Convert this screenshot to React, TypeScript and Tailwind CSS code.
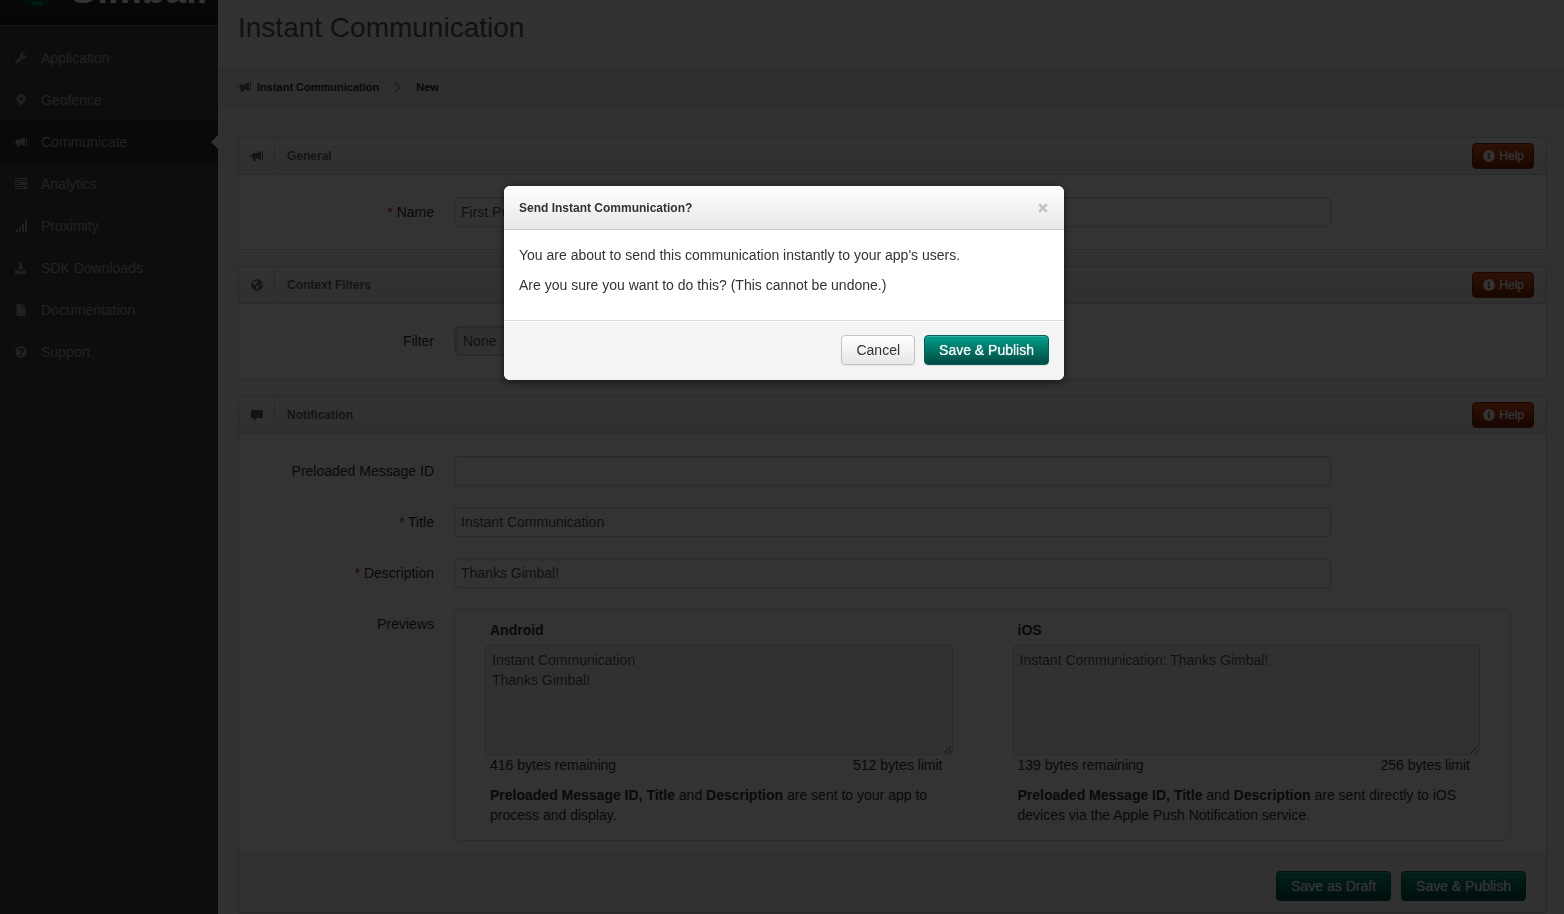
import type { ReactNode } from "react";
import { FaWrench, FaMapMarkerAlt, FaFile, FaQuestionCircle, FaInfoCircle, FaGlobeAmericas } from "react-icons/fa";

function Bullhorn() {
  return (
    <svg width="13" height="12" viewBox="0 0 13 12" fill="currentColor" aria-hidden="true">
      <path d="M12 1h1v9h-1zM11 1v9L7 8.500H5.500L6 11H3.500L3 8.500H2v-5h4zM0 4.500h1v3H0z" />
    </svg>
  );
}

function Rows() {
  return (
    <svg width="12" height="12" viewBox="0 0 12 12" fill="currentColor" aria-hidden="true">
      <path
        fillRule="evenodd"
        d="M0 0h12v3H0zM1 1v1h10V1zM0 4h12v3H0zM1 5v1h5V5zM0 8h12v3H0zM1 9v1h8V9z"
      />
    </svg>
  );
}

function Signal() {
  return (
    <svg width="12" height="12" viewBox="0 0 12 12" fill="currentColor" aria-hidden="true">
      <path d="M1 9h2v3H1zM4 7h2v5H4zM7 4h2v8H7zM10 0h2v12h-2z" />
    </svg>
  );
}

function DownloadTray() {
  return (
    <svg width="12" height="12" viewBox="0 0 12 12" fill="currentColor" aria-hidden="true">
      <path d="M4 0h3v5h2.500l-4 3.500L1.500 5H4z" />
      <path d="M0 8h3l2.500 2L8 8h3v4H0zM8 9.500v1h2v-1z" fillRule="evenodd" />
    </svg>
  );
}

function Comment() {
  return (
    <svg width="12" height="12" viewBox="0 0 12 12" fill="currentColor" aria-hidden="true">
      <path d="M0 1h12v8H5.500L2.500 12V9H0z" />
    </svg>
  );
}

const navItems: { label: string; icon: ReactNode; active?: boolean }[] = [
  { label: "Application", icon: <FaWrench size={12} /> },
  { label: "Geofence", icon: <FaMapMarkerAlt size={12} /> },
  { label: "Communicate", icon: <Bullhorn />, active: true },
  { label: "Analytics", icon: <Rows /> },
  { label: "Proximity", icon: <Signal /> },
  { label: "SDK Downloads", icon: <DownloadTray /> },
  { label: "Documentation", icon: <FaFile size={12} /> },
  { label: "Support", icon: <FaQuestionCircle size={12} /> },
];

function Sidebar() {
  return (
    <aside className="w-[218px] shrink-0 bg-[#414141]">
      <div className="flex h-[26px] items-end gap-1 overflow-hidden border-b border-[#6a6a6a] bg-linear-to-b from-[#282828] to-[#1c1c1c] pb-[17px] pl-[10px]">
        <svg width="54" height="54" viewBox="0 0 54 54" className="shrink-0" aria-hidden="true">
          <circle cx="27" cy="27" r="25" fill="none" stroke="#084a40" strokeWidth="3" strokeDasharray="6 2" />
          <circle cx="27" cy="31" r="18" fill="none" stroke="#0a5a4d" strokeWidth="3" />
          <ellipse cx="27" cy="49" rx="6" ry="2" fill="#0b8f79" />
        </svg>
        <span className="text-[38px] leading-9 font-bold text-white">Gimbal.</span>
      </div>
      <nav className="mt-[10px] border-t border-[#383838]">
        {navItems.map((item) => (
          <a
            key={item.label}
            href="#"
            className={
              "relative flex h-[42px] items-center gap-[14px] border-b border-[#383838] pl-[14px] text-sm text-[#a8a8a8] " +
              (item.active ? "bg-[#2d2d2d]" : "")
            }
          >
            <span className="flex w-[13px] justify-center text-[#a0a0a0]">{item.icon}</span>
            {item.label}
            {item.active && (
              <svg width="7" height="14" viewBox="0 0 7 14" className="absolute right-0" aria-hidden="true">
                <path d="M7 0v14L0 7z" fill="#f5f5f5" />
              </svg>
            )}
          </a>
        ))}
      </nav>
    </aside>
  );
}

function Card({ title, icon, children }: { title: string; icon: ReactNode; children: ReactNode }) {
  return (
    <section className="border border-[#d0d0d0] bg-[#fcfcfc]">
      <header className="flex h-[37px] items-stretch border-b border-[#d0d0d0] bg-linear-to-b from-[#fafafa] to-[#ececec]">
        <span className="flex w-9 items-center justify-center border-r border-[#d0d0d0] text-[#666666]">{icon}</span>
        <h2 className="flex flex-1 items-center pl-3 text-xs font-bold text-[#666666]">{title}</h2>
        <button
          type="button"
          className="mt-[5px] mr-3 flex h-[26px] items-center gap-1 rounded border border-[#7d2a0b] bg-linear-to-b from-[#e6551e] to-[#7d2000] pr-[9px] pl-[10px] text-xs text-white [text-shadow:0_0_1px_rgba(255,255,255,0.7)]"
        >
          <FaInfoCircle size={12} />
          Help
        </button>
      </header>
      {children}
    </section>
  );
}

function Row({
  label,
  htmlFor,
  required,
  divider,
  children,
}: {
  label: string;
  htmlFor?: string;
  required?: boolean;
  divider?: boolean;
  children: ReactNode;
}) {
  return (
    <div className={"mx-[15px] flex gap-5 py-[10px] " + (divider ? "border-b border-[#f3f3f3]" : "")}>
      <label htmlFor={htmlFor} className="w-[180px] shrink-0 text-right text-sm leading-[30px] text-[#333333]">
        {required && <span className="text-[#e00000]">* </span>}
        {label}
      </label>
      <div className="mr-5 min-w-0 flex-1">{children}</div>
    </div>
  );
}

function TextInput({ id, value }: { id: string; value: string }) {
  return (
    <input
      id={id}
      type="text"
      defaultValue={value}
      className="block h-[30px] w-[83%] rounded border border-[#cccccc] bg-[#fcfcfc] px-[6px] text-sm text-[#555555] shadow-[inset_0_1px_1px_rgba(0,0,0,0.075)]"
    />
  );
}

function Preview({
  id,
  platform,
  text,
  remaining,
  limit,
  children,
}: {
  id: string;
  platform: string;
  text: string;
  remaining: number;
  limit: number;
  children: ReactNode;
}) {
  return (
    <div className="flex-1 px-[30px] pt-[10px] pb-[15px] text-sm leading-5 text-[#333333]">
      <label htmlFor={id} className="mb-[5px] block pl-[5px] font-bold">
        {platform}
      </label>
      <textarea
        id={id}
        readOnly
        defaultValue={text}
        className="block h-[110px] w-full resize rounded border border-[#cccccc] bg-[#f2f2f2] px-[6px] py-1 text-[#555555]"
      />
      <div className="flex justify-between pr-[10px] pl-[5px]">
        <span>{remaining} bytes remaining</span>
        <span>{limit} bytes limit</span>
      </div>
      <p className="mt-[10px] pl-[5px]">
        <b>Preloaded Message ID, Title</b> and <b>Description</b> {children}
      </p>
    </div>
  );
}

function PrimaryButton({ children }: { children: ReactNode }) {
  return (
    <button
      type="button"
      className="h-[30px] rounded border border-[#006154] bg-linear-to-b from-[#00a18b] to-[#004a41] px-[14px] text-sm text-white shadow-[inset_0_1px_0_rgba(255,255,255,0.2),0_1px_1px_rgba(0,0,0,0.1)] [text-shadow:0_0_1px_rgba(255,255,255,0.7)]"
    >
      {children}
    </button>
  );
}

function ConfirmDialog() {
  return (
    <div className="fixed inset-0 z-50 flex items-start justify-center bg-black/80 pt-[186px] pl-1">
      <div
        role="dialog"
        aria-modal="true"
        aria-labelledby="confirm-title"
        className="w-[560px] overflow-hidden rounded-md bg-white text-sm leading-5 text-[#333333] shadow-[0_2px_8px_rgba(0,0,0,0.6)]"
      >
        <div className="flex h-11 items-center justify-between border-b border-[#cccccc] bg-linear-to-b from-white to-[#e8e8e8] px-[15px]">
          <h3 id="confirm-title" className="text-xs font-bold">
            Send Instant Communication?
          </h3>
          <button type="button" aria-label="Close" className="flex w-3 justify-center text-[#c2c2c2]">
            <svg width="10" height="10" viewBox="0 0 10 10" aria-hidden="true">
              <path d="M1.200 1.200l7.600 7.600M8.800 1.200L1.200 8.800" stroke="currentColor" strokeWidth="2.600" />
            </svg>
          </button>
        </div>
        <div className="px-[15px] pt-[15px] pb-[25px]">
          <p className="mb-[10px]">You are about to send this communication instantly to your app's users.</p>
          <p>Are you sure you want to do this? (This cannot be undone.)</p>
        </div>
        <div className="flex justify-end gap-[9px] border-t border-[#dddddd] bg-[#f4f4f4] px-[15px] pt-[14px] pb-[15px] shadow-[inset_0_1px_0_#ffffff]">
          <button
            type="button"
            className="h-[30px] rounded border border-[#c4c4c4] bg-linear-to-b from-white to-[#e6e6e6] px-[14px] shadow-[0_1px_1px_rgba(0,0,0,0.08)]"
          >
            Cancel
          </button>
          <PrimaryButton>Save &amp; Publish</PrimaryButton>
        </div>
      </div>
    </div>
  );
}

export default function App() {
  return (
    <div className="flex min-h-screen bg-[#f3f3f3] font-['Liberation_Sans',Arial,sans-serif]">
      <Sidebar />
      <main className="min-w-0 flex-1">
        <div className="h-[68px] bg-linear-to-b from-[#fafafa] to-[#f3f3f3] px-5 pt-2">
          <h1 className="text-[28px] leading-10 text-[#555555]">Instant Communication</h1>
        </div>
        <div className="flex h-[38px] items-center border-y border-[#dcdcdc] bg-[#e9e9e9] px-5 text-[11px] font-bold text-[#2a2a2a]">
          <span className="mr-[6px] text-[#666666]">
            <Bullhorn />
          </span>
          <a href="#">Instant Communication</a>
          <svg width="7" height="11" viewBox="0 0 7 11" fill="none" stroke="#888888" className="mx-[15px]" aria-hidden="true">
            <path d="M1 .5l5 5-5 5" strokeWidth="1.200" />
          </svg>
          <span>New</span>
        </div>

        <div className="flex flex-col gap-4 pt-[31px] pr-[17px] pl-5">
          <Card title="General" icon={<Bullhorn />}>
            <div className="py-3">
              <Row label="Name" htmlFor="name" required>
                <TextInput id="name" value="First Push" />
              </Row>
            </div>
          </Card>

          <Card title="Context Filters" icon={<FaGlobeAmericas size={12} />}>
            <div className="py-3">
              <Row label="Filter" htmlFor="filter" divider>
                <select
                  id="filter"
                  className="block h-[30px] w-[220px] appearance-none rounded-md border border-[#cccccc] bg-[#ededed] px-2 text-sm text-[#555555] shadow-[inset_2px_1px_2px_rgba(0,0,0,0.12)]"
                >
                  <option>None</option>
                </select>
              </Row>
            </div>
          </Card>

          <Card title="Notification" icon={<Comment />}>
            <div className="pt-3">
              <Row label="Preloaded Message ID" htmlFor="message-id" divider>
                <TextInput id="message-id" value="" />
              </Row>
              <Row label="Title" htmlFor="title" required divider>
                <TextInput id="title" value="Instant Communication" />
              </Row>
              <Row label="Description" htmlFor="description" required divider>
                <TextInput id="description" value="Thanks Gimbal!" />
              </Row>
              <Row label="Previews" htmlFor="android-preview">
                <div className="flex rounded-md border border-[#dcdcdc]">
                  <Preview
                    id="android-preview"
                    platform="Android"
                    text={"Instant Communication\nThanks Gimbal!"}
                    remaining={416}
                    limit={512}
                  >
                    are sent to your app to process and display.
                  </Preview>
                  <Preview
                    id="ios-preview"
                    platform="iOS"
                    text="Instant Communication: Thanks Gimbal!"
                    remaining={139}
                    limit={256}
                  >
                    are sent directly to iOS devices via the Apple Push Notification service.
                  </Preview>
                </div>
              </Row>
            </div>
            <footer className="flex justify-end gap-[10px] border-t border-[#eaeaea] bg-[#f5f5f5] px-5 pt-[19px] pb-[11px]">
              <PrimaryButton>Save as Draft</PrimaryButton>
              <PrimaryButton>Save &amp; Publish</PrimaryButton>
            </footer>
          </Card>
        </div>
      </main>
      <ConfirmDialog />
    </div>
  );
}
